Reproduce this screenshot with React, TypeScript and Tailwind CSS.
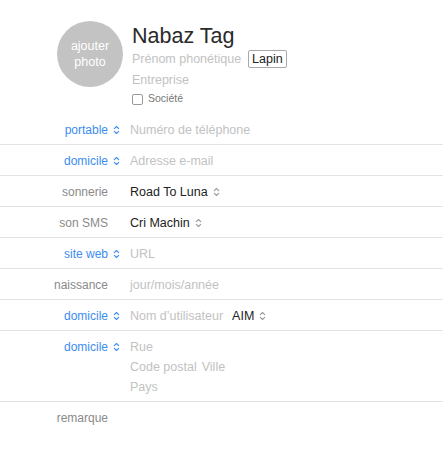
import React from 'react';

const Chevrons = ({ className }: { className?: string }) => (
  <svg width="7" height="10" viewBox="0 0 7 10" className={className} fill="none" stroke="currentColor" strokeWidth="1.1" strokeLinecap="round" strokeLinejoin="round">
    <path d="M1.3 3.7 L3.5 1.5 L5.7 3.7" />
    <path d="M1.3 6.3 L3.5 8.5 L5.7 6.3" />
  </svg>
);

type RowProps = {
  label: string;
  blue?: boolean;
  children?: React.ReactNode;
  last?: boolean;
};

const Row = ({ label, blue, children, last }: RowProps) => (
  <div className={`flex pt-[6px] pb-[4px] leading-[20px] ${last ? '' : 'border-b border-[#e3e3e3]'}`}>
    <div className="w-[108px] shrink-0 text-right text-[12px]">
      <span className={blue ? 'text-[#3b8df0]' : 'text-[#8a8a8a]'}>{label}</span>
    </div>
    <div className="w-[22px] shrink-0 pl-[5px] flex items-start pt-[5px]">
      {blue && <Chevrons className="text-[#3b8df0]" />}
    </div>
    <div className="flex-1 text-[12.5px]">{children}</div>
  </div>
);

const Placeholder = ({ children }: { children: React.ReactNode }) => (
  <span className="text-[#c2c2c2]">{children}</span>
);

const Select = ({ children }: { children: React.ReactNode }) => (
  <span className="inline-flex items-center gap-[5px] text-[#222]">
    {children}
    <Chevrons className="text-[#9a9a9a]" />
  </span>
);

export default function App() {
  return (
    <div className="w-[443px] h-[449px] bg-white overflow-hidden" style={{ fontFamily: '"Liberation Sans", Arial, sans-serif' }}>
      {/* Header */}
      <div className="h-[114px] flex">
        <div className="ml-[57px] mt-[21px] w-[66px] h-[66px] rounded-full bg-[#c3c3c3] flex flex-col items-center justify-center text-white text-[12.5px] leading-[16px]">
          <span>ajouter</span>
          <span>photo</span>
        </div>
        <div className="ml-[9px] pt-[23px] flex flex-col">
          <div className="text-[21.5px] leading-[26px] text-[#2a2a2a]">Nabaz Tag</div>
          <div className="flex items-center h-[20px] text-[12.5px]">
            <Placeholder>Prénom phonétique</Placeholder>
            <span className="ml-[7px] border border-[#a8a8a8] rounded-[2px] px-[3px] h-[18px] leading-[17px] text-[#222]">Lapin</span>
          </div>
          <div className="h-[21px] leading-[22px] text-[12.5px]">
            <Placeholder>Entreprise</Placeholder>
          </div>
          <div className="flex items-center h-[18px] gap-[5px]">
            <span className="w-[11px] h-[11px] border border-[#9a9a9a] rounded-[2px] bg-white" />
            <span className="text-[10.5px] text-[#777]">Société</span>
          </div>
        </div>
      </div>

      <Row label="portable" blue>
        <Placeholder>Numéro de téléphone</Placeholder>
      </Row>
      <Row label="domicile" blue>
        <Placeholder>Adresse e-mail</Placeholder>
      </Row>
      <Row label="sonnerie">
        <Select>Road To Luna</Select>
      </Row>
      <Row label="son SMS">
        <Select>Cri Machin</Select>
      </Row>
      <Row label="site web" blue>
        <Placeholder>URL</Placeholder>
      </Row>
      <Row label="naissance">
        <Placeholder>jour/mois/année</Placeholder>
      </Row>
      <Row label="domicile" blue>
        <span className="inline-flex items-center gap-[9px]">
          <Placeholder>Nom d’utilisateur</Placeholder>
          <Select>AIM</Select>
        </span>
      </Row>
      <Row label="domicile" blue>
        <div className="flex flex-col">
          <Placeholder>Rue</Placeholder>
          <span className="flex gap-[5px]">
            <Placeholder>Code postal</Placeholder>
            <Placeholder>Ville</Placeholder>
          </span>
          <Placeholder>Pays</Placeholder>
        </div>
      </Row>
      <Row label="remarque" last />
    </div>
  );
}
